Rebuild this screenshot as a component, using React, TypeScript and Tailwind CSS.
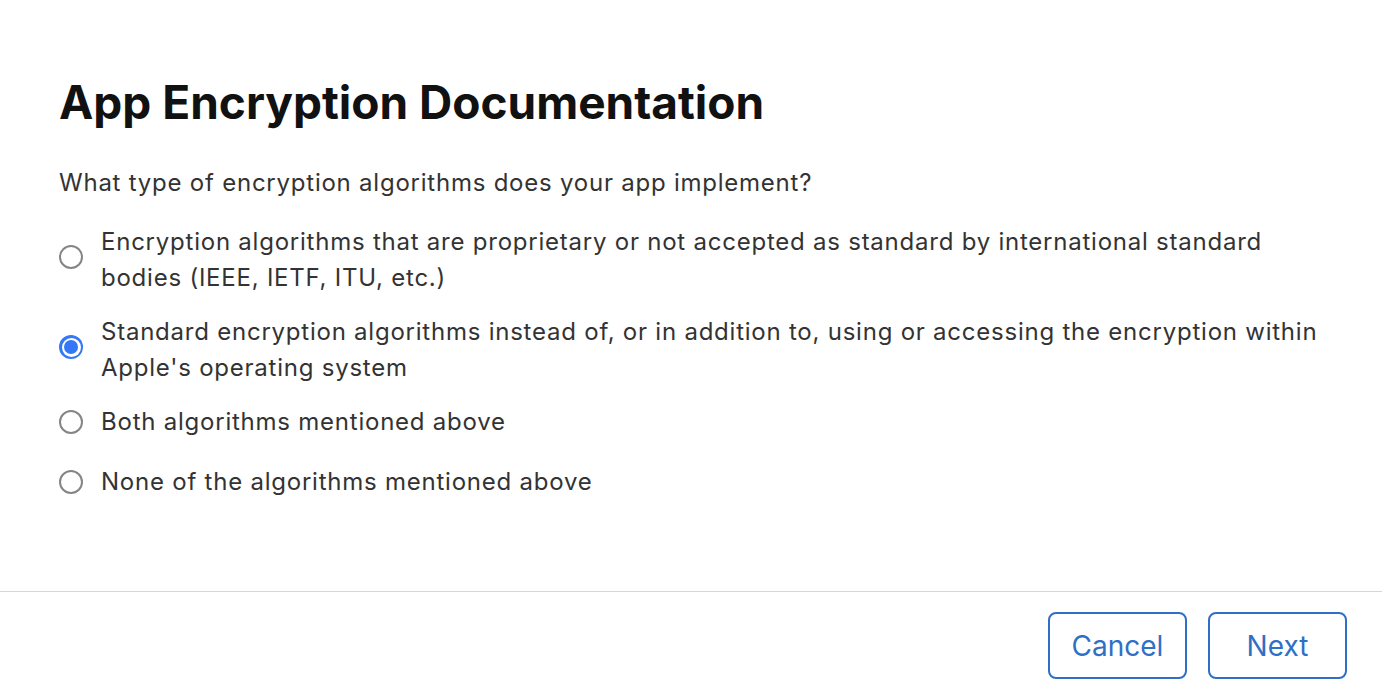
const options = [
  {
    label:
      "Encryption algorithms that are proprietary or not accepted as standard by international standard bodies (IEEE, IETF, ITU, etc.)",
    checked: false,
  },
  {
    label:
      "Standard encryption algorithms instead of, or in addition to, using or accessing the encryption within Apple's operating system",
    checked: true,
  },
  { label: "Both algorithms mentioned above", checked: false },
  { label: "None of the algorithms mentioned above", checked: false },
];

function Radio({ checked }: { checked: boolean }) {
  if (checked) {
    return (
      <span className="flex h-[24px] w-[24px] shrink-0 items-center justify-center rounded-full bg-[#3478f6]">
        <span className="flex h-[19px] w-[19px] items-center justify-center rounded-full bg-white">
          <span className="h-[14px] w-[14px] rounded-full bg-[#3478f6]" />
        </span>
      </span>
    );
  }
  return (
    <span className="block h-[24px] w-[24px] shrink-0 rounded-full border-[2px] border-[#858585] bg-white" />
  );
}

export default function App() {
  return (
    <div className="flex min-h-screen flex-col bg-white font-['Inter',sans-serif]">
      <main className="flex-1 px-[59px] pt-[75px]">
        <h1 className="text-[46px] font-bold leading-[54px] text-[#111111]">
          App Encryption Documentation
        </h1>
        <p className="mt-[36px] text-[24px] leading-[36px] tracking-[0.032em] text-[#333333]">
          What type of encryption algorithms does your app implement?
        </p>
        <div className="mt-[23px] flex flex-col gap-[18px]">
          {options.map((o, i) => (
            <label
              key={i}
              className={
                "flex cursor-pointer items-center gap-[18px] " +
                (i === 3 ? "mt-[6px]" : "")
              }
            >
              <span
                className={
                  "flex shrink-0 " + (o.label.length > 60 ? "-mt-[6px]" : "")
                }
              >
                <Radio checked={o.checked} />
              </span>
              <span className="text-[24px] leading-[36px] tracking-[0.032em] text-[#333333]">
                {o.label}
              </span>
            </label>
          ))}
        </div>
      </main>
      <footer className="flex justify-end gap-[21px] border-t border-[#d6d6d6] pb-[15px] pr-[35px] pt-[20px]">
        <button className="h-[67px] w-[139px] rounded-[8px] border-[2px] border-[#2f6fc6] text-[28px] text-[#2f6fc6]">
          Cancel
        </button>
        <button className="h-[67px] w-[139px] rounded-[8px] border-[2px] border-[#2f6fc6] text-[28px] text-[#2f6fc6]">
          Next
        </button>
      </footer>
    </div>
  );
}
